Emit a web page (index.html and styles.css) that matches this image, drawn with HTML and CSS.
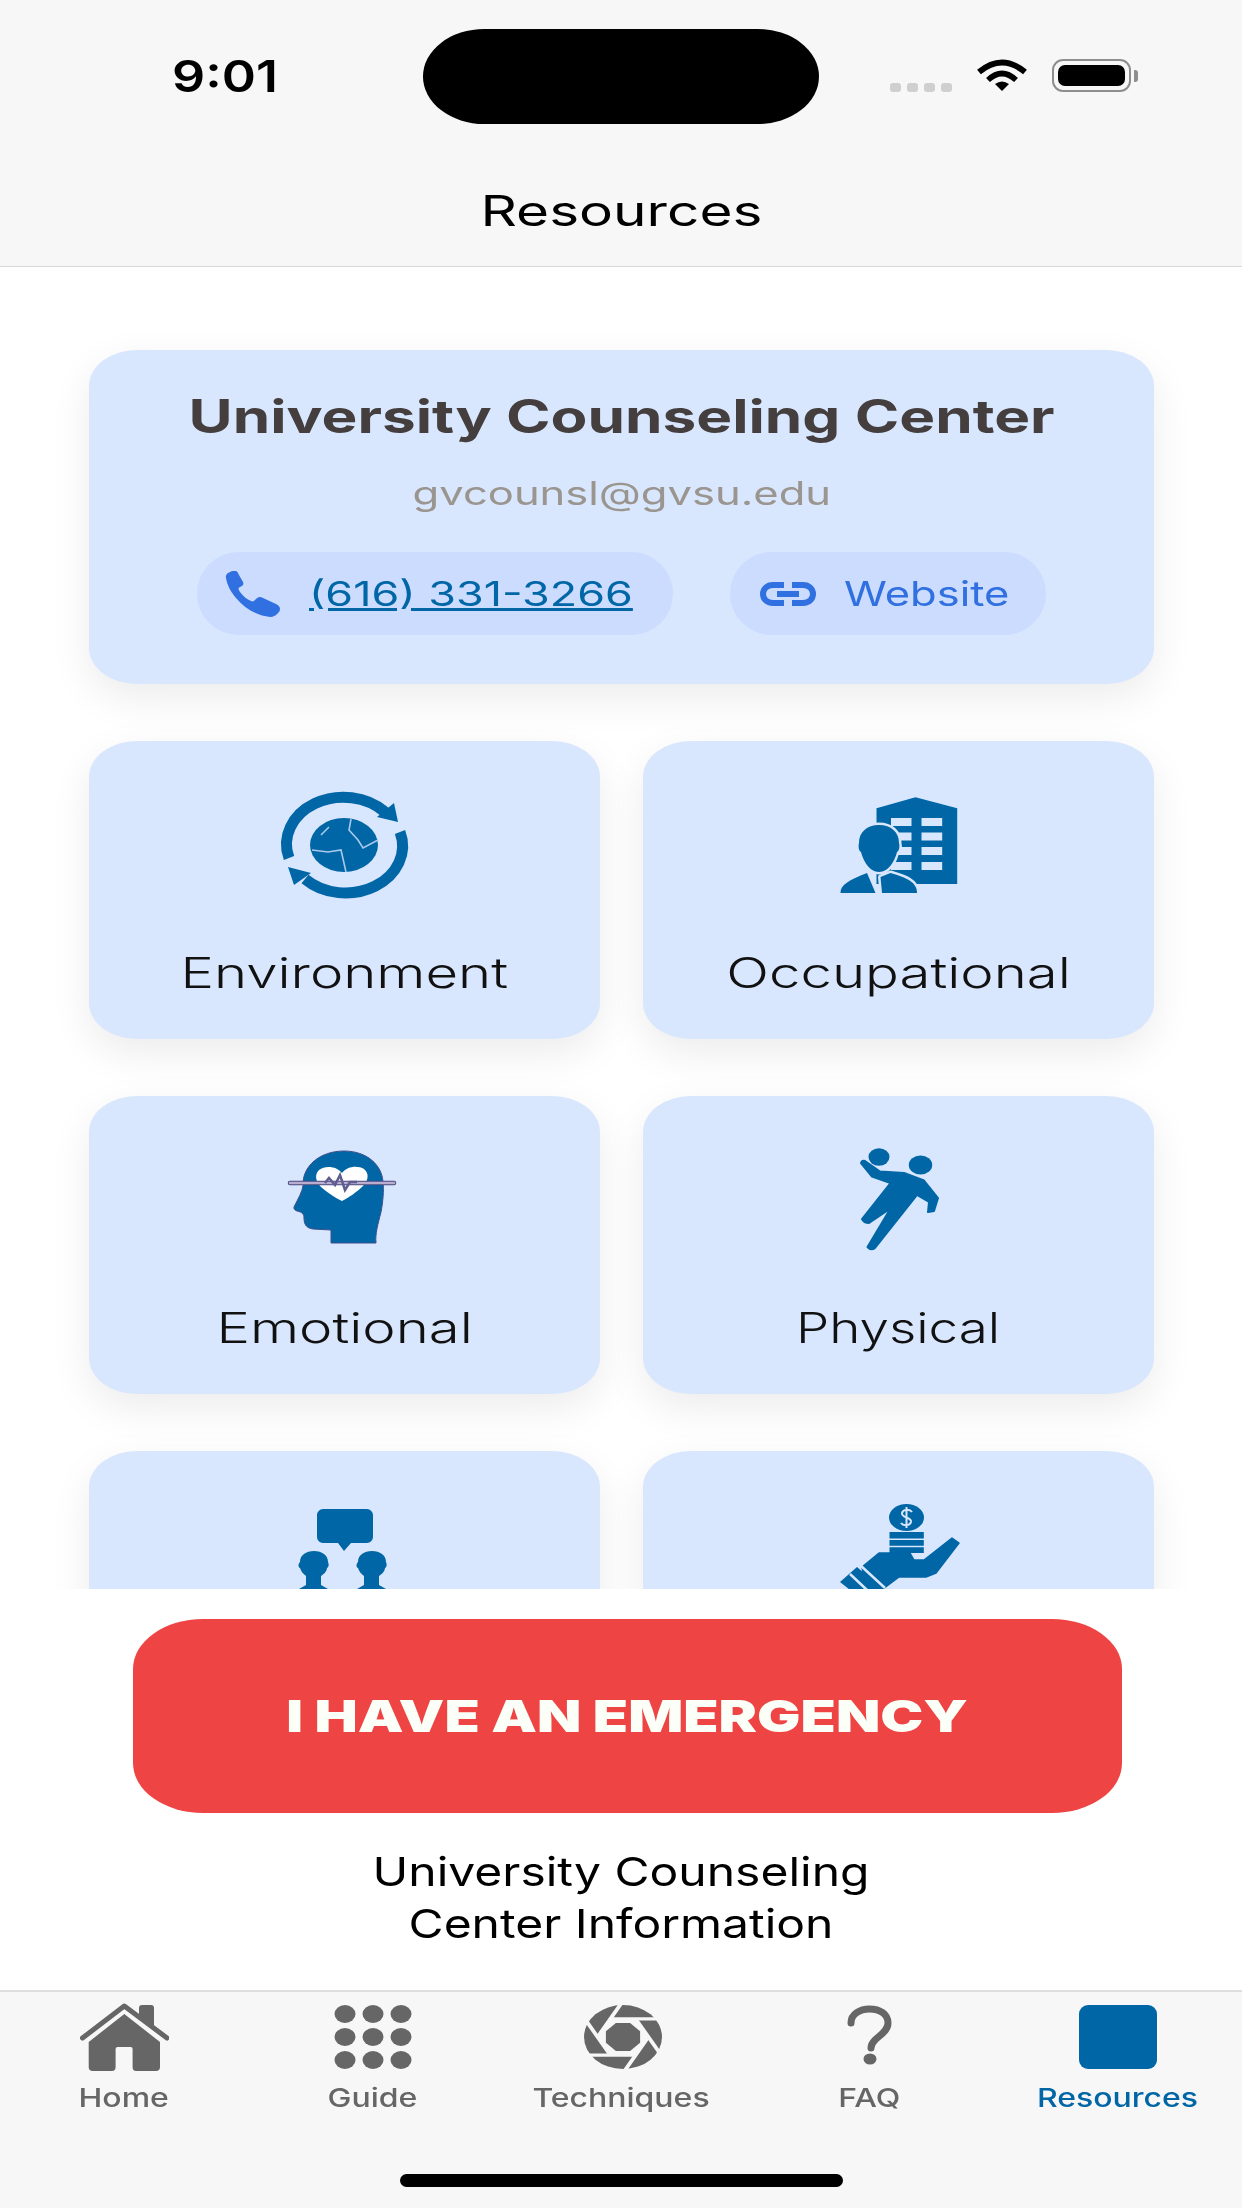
FILE: index.html
```html
<!DOCTYPE html>
<html lang="en">
  <head>
    <meta charset="UTF-8" />
    <meta name="viewport" content="width=device-width, initial-scale=1.0" />
    <title>Resources</title>
    <link rel="stylesheet" href="styles.css">
  </head>
  <body>
    <div class="app">
      <header class="top">
        <div class="status">
          <div class="time"><span class="wide">9:01</span></div>
          <div class="island"></div>
          <div class="status-icons">
            <div class="signal"><i></i><i></i><i></i><i></i></div>
            <svg class="wifi" width="54" height="32" viewBox="0 0 54 32">
              <path d="M4 13Q27-6 50 13" fill="none" stroke="#000" stroke-width="6"/>
              <path d="M13 21Q27 8 41 21" fill="none" stroke="#000" stroke-width="5.5"/>
              <path d="M20 25Q27 20 34 25L27 32Z" fill="#000"/>
            </svg>
            <div class="battery"><div class="battery-fill"></div></div>
            <div class="battery-nub"></div>
          </div>
        </div>
        <h1 class="page-title"><span class="wide">Resources</span></h1>
      </header>

      <main class="content">
        <section class="center-card">
          <h2 class="center-name"><span class="wide">University Counseling Center</span></h2>
          <p class="center-mail"><span class="wide">gvcounsl@gvsu.edu</span></p>
          <div class="pills">
            <a class="pill pill-phone">
              <svg width="56" height="46" viewBox="0 0 56 46" preserveAspectRatio="none">
                <path d="M1 7C0 3 4 1 8 0C11-1 13 1 14 4L18 11C19 13 18 15 15 16C13 17 13 18 15 21C18 25 21 28 26 30C28 31 29 30 31 28C33 26 35 25 38 27L51 33C55 35 56 38 54 41C52 44 48 46 45 46C33 45 20 38 11 27C6 21 2 14 1 7Z" fill="#3070e0"/>
              </svg>
              <span class="phone-num">(616) 331-3266</span>
            </a>
            <a class="pill pill-web">
              <svg width="56" height="24" viewBox="0 0 56 24" fill="none" stroke="#3070e0" stroke-width="6">
                <path d="M24 3H13C7 3 3 7 3 12S7 21 13 21H24"/>
                <path d="M32 3H43C49 3 53 7 53 12S49 21 43 21H32"/>
                <path d="M17 12H39"/>
              </svg>
              <span class="web-text">Website</span>
            </a>
          </div>
        </section>

        <section class="tiles">
          <div class="tile">
            <svg class="tile-icon" width="160" height="120" viewBox="0 0 160 120">
              <path d="M24 73A57 47 0 0 1 120 27" fill="none" stroke="#0066a6" stroke-width="11"/>
              <path d="M133 37L129 18L112 32Z" fill="#0066a6"/>
              <path d="M135 47A57 47 0 0 1 40 94" fill="none" stroke="#0066a6" stroke-width="11"/>
              <path d="M23 82L29 100L46 88Z" fill="#0066a6"/>
              <ellipse cx="79" cy="60" rx="34" ry="27" fill="#0066a6"/>
              <path d="M86 34L84 45L93 55L98 63L113 55M47 65L63 67L76 65L81 87M56 50L64 42" fill="none" stroke="#a9c8ec" stroke-width="1.600"/>
            </svg>
            <div class="tile-label"><span class="wide">Environment</span></div>
          </div>

          <div class="tile">
            <svg class="tile-icon" width="160" height="120" viewBox="0 0 160 120">
              <path d="M57.500 23.300L96.500 12.300L138.200 23.300V99H57.500Z" fill="#0066a6"/>
              <path d="M72 33H92.500V41H72ZM102.500 33H123.200V41H102.500ZM72 47.500H92.500V55.500H72ZM102.500 47.500H123.200V55.500H102.500ZM72 62H92.500V70H72ZM102.500 62H123.200V70H102.500ZM72 77H92.500V85H72ZM102.500 77H123.200V85H102.500Z" fill="#d8e6fe"/>
              <g fill="#0066a6" stroke="#d8e6fe" stroke-width="5" paint-order="stroke" stroke-linejoin="round">
                <path d="M60 40C72 40 80 47 80 58C81 62 80 66 78 67C76 75 70 87 60 87C50 87 44 75 42 67C40 66 39 62 40 58C40 47 48 40 60 40Z"/>
                <path d="M21.500 108C21 100 30 95 48 88L56.500 108Z"/>
                <path d="M63 108L61.500 92L71.500 88C85 92 98 96 98 108Z"/>
              </g>
            </svg>
            <div class="tile-label"><span class="wide">Occupational</span></div>
          </div>

          <div class="tile">
            <svg class="tile-icon" width="160" height="120" viewBox="0 0 160 120">
              <path d="M79 11C102 11 117 25 118 42C119 50 118 62 116 72C113 84 110 94 111 103H66V90L48 89C41 88 39 84 39 78C39 74 37 72 32 71C29 70 28 68 30 65C33 59 37 52 38 46C37 26 55 11 79 11Z" fill="#0066a6" stroke="#3d4f8c" stroke-width="1"/>
              <path d="M77 33C72 26 60 25 54 30C49 35 51 42 56 47C63 53 72 59 77 61C83 58 92 52 98 46C104 40 104 33 99 29C93 25 82 26 77 33Z" fill="#fff"/>
              <path d="M25 43H129" stroke="#4a4a80" stroke-width="4.500" stroke-linecap="round"/>
              <path d="M25 43H129" stroke="#b9aed0" stroke-width="2.500" stroke-linecap="round"/>
              <path d="M60 43L64 38L70 45L75 35L80 50L85 42H92" fill="none" stroke="#5f5c90" stroke-width="2.500"/>
            </svg>
            <div class="tile-label"><span class="wide">Emotional</span></div>
          </div>

          <div class="tile">
            <svg class="tile-icon" width="160" height="120" viewBox="0 0 160 120">
              <ellipse cx="60" cy="17" rx="10.500" ry="8.700" fill="#0066a6"/>
              <ellipse cx="101.500" cy="25" rx="11.700" ry="9.500" fill="#0066a6"/>
              <path d="M46 21L61 31.500L85 33L105 40.500L119 58L115 71L109 72L110 62L98 55L56 108Q52 111 48.500 107L71.500 68.500L50 83Q45 83 43 79L71.500 43L53 36.500L42 23Q43 20 46 21Z" fill="#0066a6" stroke="#0066a6" stroke-width="2" stroke-linejoin="round"/>
            </svg>
            <div class="tile-label tile-label-short"><span class="wide">Physical</span></div>
          </div>

          <div class="tile">
            <svg class="tile-icon" width="160" height="120" viewBox="0 0 160 120">
              <path d="M58 14H102C105 14 108 17 108 20V42C108 45 105 48 102 48H86L79 56L73 48H58C55 48 52 45 52 42V20C52 17 55 14 58 14Z" fill="#0066a6"/>
              <path d="M49 56C57 56 63 60 63 67C64 69 64 72 62 73C62 76 59 79 56 81V90L63 94V120H34V94L41 90V81C38 79 36 76 35 73C33 72 33 69 35 67C35 60 41 56 49 56Z" fill="#0066a6"/>
              <path d="M107 56C115 56 121 60 121 67C122 69 122 72 120 73C120 76 117 79 114 81V90L121 94V120H92V94L99 90V81C96 79 94 76 93 73C91 72 91 69 93 67C93 60 99 56 107 56Z" fill="#0066a6"/>
            </svg>
          </div>

          <div class="tile">
            <svg class="tile-icon" width="160" height="120" viewBox="0 0 160 120">
              <ellipse cx="87.500" cy="22.500" rx="17.500" ry="13.500" fill="#0066a6"/>
              <path d="M93 17C91 14 84 14 83 18C82 23 93 22 92 27C91 31 84 31 82 28M87.500 12V33" fill="none" stroke="#d8e6fe" stroke-width="2"/>
              <path d="M70.500 37H104.800V43.500H70.500ZM70.500 45H104.800V50.700H70.500ZM70.500 52.300H104.800V58H70.500Z" fill="#0066a6"/>
              <path d="M43 72L60 58H91L95 65H105L133 43L140 48L117 78L107 82H80L64 94L50 110Z" fill="#0066a6" stroke="#0066a6" stroke-width="1.500" stroke-linejoin="round"/>
              <path d="M21 87L38 72L66 96L50 110Z" fill="#0066a6"/>
              <path d="M41 70L66 93M31 79L48 95" stroke="#d8e6fe" stroke-width="2.500"/>
              <path d="M96 60H103V64H96Z" fill="#d8e6fe"/>
            </svg>
          </div>
        </section>
      </main>

      <section class="emergency">
        <button class="emergency-btn"><span class="wide">I HAVE AN EMERGENCY</span></button>
        <p class="emergency-info"><span class="wide">University Counseling<br />Center Information</span></p>
      </section>

      <nav class="tabbar">
        <div class="tabs">
          <div class="tab">
            <div class="tab-icon">
              <svg width="89" height="68" viewBox="0 0 89 68">
                <path d="M59 12V5Q59 2 62 2H71Q74 2 74 5V24Z" fill="#666"/>
                <path d="M2.500 35L44.300 3L87 35" fill="none" stroke="#666" stroke-width="5" stroke-linecap="round" stroke-linejoin="round"/>
                <path d="M44.300 11L80 39V64Q80 68 76 68H56Q52.600 68 52.600 64V46Q52.600 44 50.600 44H37.600Q35.600 44 35.600 46V64Q35.600 68 32 68H12.700Q8.700 68 8.700 64V39Z" fill="#666"/>
              </svg>
            </div>
            <div class="tab-label"><span class="wide">Home</span></div>
          </div>
          <div class="tab">
            <div class="tab-icon">
              <svg width="78" height="64" viewBox="0 0 78 64" fill="#666">
                <ellipse cx="11" cy="9" rx="10.500" ry="9"/><ellipse cx="39" cy="9" rx="10.500" ry="9"/><ellipse cx="67" cy="9" rx="10.500" ry="9"/>
                <ellipse cx="11" cy="32" rx="10.500" ry="9"/><ellipse cx="39" cy="32" rx="10.500" ry="9"/><ellipse cx="67" cy="32" rx="10.500" ry="9"/>
                <ellipse cx="11" cy="55" rx="10.500" ry="9"/><ellipse cx="39" cy="55" rx="10.500" ry="9"/><ellipse cx="67" cy="55" rx="10.500" ry="9"/>
              </svg>
            </div>
            <div class="tab-label"><span class="wide">Guide</span></div>
          </div>
          <div class="tab">
            <div class="tab-icon">
              <svg width="82" height="64" viewBox="-4 0 82 78" preserveAspectRatio="none">
                <circle cx="39" cy="39" r="39" fill="#666"/>
                <g stroke="#f7f7f7" stroke-width="4">
                  <path d="M26 17H84"/>
                  <path d="M26 17H84" transform="rotate(60 39 39)"/>
                  <path d="M26 17H84" transform="rotate(120 39 39)"/>
                  <path d="M26 17H84" transform="rotate(180 39 39)"/>
                  <path d="M26 17H84" transform="rotate(240 39 39)"/>
                  <path d="M26 17H84" transform="rotate(300 39 39)"/>
                </g>
                <path d="M64.400 39L51.700 61H26.300L13.600 39L26.300 17H51.700Z" fill="#f7f7f7"/>
                <path d="M56.100 32V46L46.100 56.100H31.900L21.900 46V32L31.900 21.900H46.100Z" fill="#666"/>
              </svg>
            </div>
            <div class="tab-label"><span class="wide">Techniques</span></div>
          </div>
          <div class="tab">
            <div class="tab-icon">
              <svg width="78" height="64" viewBox="0 0 78 64">
                <path d="M21 18C21 9 30 4 39.500 4C50 4 58 9 58 18C58 26 50 30 45 35C42 38 41 40 41 43" fill="none" stroke="#666" stroke-width="7" stroke-linecap="round"/>
                <ellipse cx="40" cy="54" rx="6.500" ry="5.500" fill="#666"/>
              </svg>
            </div>
            <div class="tab-label"><span class="wide">FAQ</span></div>
          </div>
          <div class="tab active">
            <div class="tab-icon"><div class="tab-square"></div></div>
            <div class="tab-label"><span class="wide">Resources</span></div>
          </div>
        </div>
        <div class="home-bar"></div>
      </nav>
    </div>
  </body>
</html>
```

FILE: styles.css
```css
* {
  margin: 0;
  padding: 0;
  box-sizing: border-box;
}
body {
  font-family: Inter, "Liberation Sans", sans-serif;
  background-color: #fff;
}
.app {
  width: 1242px;
  height: 2208px;
  display: flex;
  flex-direction: column;
  overflow: hidden;
}
/* the shot is stretched sideways, so the letters are too */
.wide {
  display: inline-block;
  transform: scaleX(1.18);
}

.top {
  height: 267px;
  background-color: #f7f7f7;
  border-bottom: 1px solid #d8d8d8;
}
.status {
  display: grid;
  grid-template-columns: 1fr 396px 1fr;
  padding-top: 29px;
  height: 124px;
}
.time {
  padding-left: 172px;
  padding-top: 21px;
  font-size: 44px;
  line-height: 52px;
  font-weight: 600;
  color: #000;
}
.time .wide {
  transform-origin: left;
}
.island {
  height: 95px;
  background-color: #000;
  border-radius: 62px / 48px;
}
.status-icons {
  display: flex;
  align-items: flex-start;
  padding-left: 71px;
  padding-top: 30px;
}
.signal {
  display: flex;
  gap: 6px;
  margin-top: 24px;
  margin-right: 23px;
}
.signal i {
  display: block;
  width: 11px;
  height: 9px;
  border-radius: 3px;
  background-color: #cfcfcf;
}
.battery {
  margin-left: 23px;
  width: 79px;
  height: 33px;
  padding: 4px;
  border: 2px solid #8e8e8e;
  border-radius: 11px;
}
.battery-fill {
  height: 100%;
  background-color: #000;
  border-radius: 7px;
}
.battery-nub {
  width: 4px;
  height: 12px;
  margin-top: 11px;
  margin-left: 3px;
  background-color: #8e8e8e;
  border-radius: 0 3px 3px 0;
}
.page-title {
  margin-top: 60px;
  text-align: center;
  font-size: 42px;
  line-height: 54px;
  font-weight: 400;
  color: #000;
}
.page-title .wide {
  transform: scaleX(1.35);
}

.content {
  flex: 1;
  min-height: 0;
  overflow: hidden;
  padding: 83px 88px 0 89px;
}
.center-card {
  height: 334px;
  padding-top: 38px;
  text-align: center;
  background-color: #d8e6fe;
  border-radius: 48px / 36px;
  box-shadow: 0 14px 40px rgba(0, 0, 0, 0.08);
}
.center-name {
  font-size: 46px;
  line-height: 56px;
  font-weight: 700;
  color: #443f3e;
}
.center-name .wide {
  transform: scaleX(1.31);
}
.center-mail {
  margin-top: 30px;
  font-size: 32px;
  line-height: 40px;
  color: #9b9590;
}
.center-mail .wide {
  transform: scaleX(1.36);
}
.pills {
  display: flex;
  justify-content: center;
  gap: 57px;
  margin-top: 38px;
}
.pill {
  display: flex;
  align-items: center;
  gap: 28px;
  height: 83px;
  background-color: #cbdcfe;
  border-radius: 42px;
}
.pill-phone {
  width: 476px;
  padding-left: 28px;
}
.pill-web {
  width: 316px;
  padding-left: 30px;
}
.phone-num,
.web-text {
  display: inline-block;
  font-size: 34px;
  line-height: 40px;
  transform-origin: left;
}
.phone-num {
  color: #0066a6;
  text-decoration: underline;
  transform: scaleX(1.32);
}
.web-text {
  color: #3070e0;
  transform: scaleX(1.28);
}

.tiles {
  display: grid;
  grid-template-columns: 1fr 1fr;
  gap: 57px 43px;
  margin-top: 57px;
}
.tile {
  height: 298px;
  padding-top: 44px;
  text-align: center;
  background-color: #d8e6fe;
  border-radius: 48px / 36px;
  box-shadow: 0 14px 40px rgba(0, 0, 0, 0.08);
}
.tile-icon {
  display: block;
  margin: 0 auto;
  filter: blur(0.7px);
}
.tile-label {
  margin-top: 42px;
  font-size: 42px;
  line-height: 52px;
  font-weight: 300;
  color: #111;
}
.tile-label .wide {
  transform: scaleX(1.34);
}
.tile-label-short .wide {
  transform: scaleX(1.26);
}

.emergency {
  position: relative;
  height: 401px;
  padding-top: 30px;
  text-align: center;
  background-color: #fff;
}
.emergency-btn {
  display: block;
  width: 989px;
  height: 194px;
  margin-left: 133px;
  border: none;
  border-radius: 70px / 50px;
  background-color: #ef4444;
  color: #fbfff8;
  font-family: inherit;
  font-size: 44px;
  font-weight: 900;
}
.emergency-btn .wide {
  transform: scaleX(1.31);
}
.emergency-info {
  margin-top: 33px;
  font-size: 40px;
  line-height: 52px;
  color: #000;
}
.emergency-info .wide {
  transform: scaleX(1.2);
}

.tabbar {
  height: 218px;
  display: flex;
  flex-direction: column;
  background-color: #f7f7f7;
  border-top: 2px solid #dedede;
}
.tabs {
  display: grid;
  grid-template-columns: repeat(5, 1fr);
  padding-top: 11px;
}
.tab {
  display: flex;
  flex-direction: column;
  align-items: center;
  color: #666;
}
.tab-icon {
  height: 68px;
  display: flex;
  align-items: center;
  justify-content: center;
}
.tab-square {
  width: 78px;
  height: 64px;
  background-color: #0066a6;
  border-radius: 9px;
}
.tab-label {
  margin-top: 12px;
  font-size: 26px;
  line-height: 30px;
  font-weight: 500;
  white-space: nowrap;
}
.tab-label .wide {
  transform: scaleX(1.23);
}
.active {
  color: #0066a6;
}
.home-bar {
  width: 443px;
  height: 13px;
  margin: auto auto 21px;
  background-color: #000;
  border-radius: 7px;
}
```
